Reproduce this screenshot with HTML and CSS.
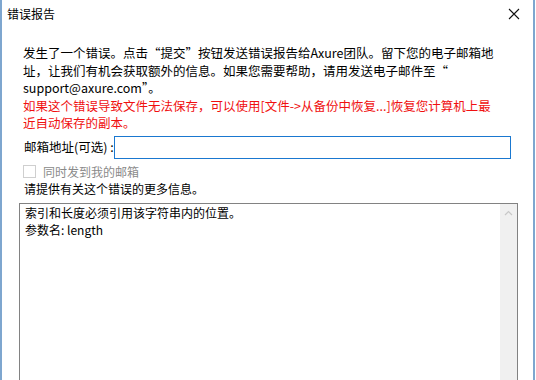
FILE: index.html
```html
<!DOCTYPE html>
<html lang="zh-CN">
<head>
    <meta charset="UTF-8">
    <title>错误报告</title>
    <link rel="stylesheet" href="styles.css">
</head>
<body>
    <div class="window">
        <div class="titlebar">
            <span class="title">错误报告</span>
            <svg class="close-btn" width="12" height="12" viewBox="0 0 12 12">
                <path d="M1 1 L11 11 M11 1 L1 11" stroke="#111" stroke-width="1.1" fill="none"/>
            </svg>
        </div>

        <div class="content">
            <p class="msg">发生了一个错误。点击“提交”按钮发送错误报告给Axure团队。留下您的电子邮箱地址，让我们有机会获取额外的信息。如果您需要帮助，请用发送电子邮件至“<br>support@axure.com”。</p>
            <p class="warn">如果这个错误导致文件无法保存，可以使用[文件-&gt;从备份中恢复...]恢复您计算机上最近自动保存的副本。</p>

            <div class="email-row">
                <label for="email">邮箱地址(可选) :</label>
                <input type="text" id="email" class="email-input">
            </div>

            <div class="check-row">
                <span class="checkbox"></span>
                <span class="check-label">同时发到我的邮箱</span>
            </div>

            <div class="hint">请提供有关这个错误的更多信息。</div>

            <div class="detail-box">
                <div class="detail-text">
                    索引和长度必须引用该字符串内的位置。<br>
                    参数名: length
                </div>
                <div class="scrollbar">
                    <svg width="9" height="6" viewBox="0 0 9 6">
                        <path d="M1 5 L4.5 1.5 L8 5" stroke="#c8c8c8" stroke-width="1.2" fill="none"/>
                    </svg>
                </div>
            </div>
        </div>
    </div>
</body>
</html>
```

FILE: styles.css
```css
*{margin: 0; padding: 0; box-sizing: border-box;}

body{
    background-color: #fff;
    font-family: "Noto Sans CJK SC", "Microsoft YaHei", sans-serif;
    font-size: 12px;
    color: #000;
}

.window{
    width: 535px;
    height: 380px;
    border-left: 2px solid #7ea6cf;
    border-right: 2px solid #7ea6cf;
    background-color: #fff;
    display: flex;
    flex-direction: column;
    overflow: hidden;
}

.titlebar{
    height: 27px;
    display: flex;
    align-items: center;
    justify-content: space-between;
    padding: 0 13px 0 5px;
    flex-shrink: 0;
}

.title{
    font-size: 12px;
    line-height: 16px;
}

.content{
    padding: 17px 22px 0 19px;
}

.msg, .warn{
    font-size: 12.5px;
    line-height: 17.5px;
    padding-left: 2px;
    width: 482px;
}

.warn{
    color: #f01010;
}

.email-row{
    display: flex;
    align-items: center;
    margin-top: 4px;
    padding-left: 3px;
}

.email-row label{
    font-size: 12.5px;
    line-height: 16px;
    width: 90px;
    flex-shrink: 0;
}

.email-input{
    width: 400px;
    height: 23px;
    border: 1px solid #1a78d0;
    outline: none;
    font-size: 12px;
}

.check-row{
    display: flex;
    align-items: center;
    margin-top: 4px;
    padding-left: 2px;
    height: 17px;
}

.checkbox{
    width: 13px;
    height: 13px;
    border: 1px solid #cfcfcf;
    margin-right: 7px;
}

.check-label{
    font-size: 12px;
    line-height: 17px;
    color: #8a8a8a;
}

.hint{
    font-size: 12px;
    line-height: 17px;
    padding-left: 3px;
}

.detail-box{
    margin-top: 6px;
    margin-left: -2px;
    width: 499px;
    height: 200px;
    border: 1px solid #828282;
    display: flex;
}

.detail-text{
    flex: 1;
    padding: 0 5px;
    font-size: 12px;
    line-height: 17.5px;
}

.scrollbar{
    width: 17px;
    background-color: #f0f0f0;
    display: flex;
    justify-content: center;
    padding-top: 6px;
}
```
